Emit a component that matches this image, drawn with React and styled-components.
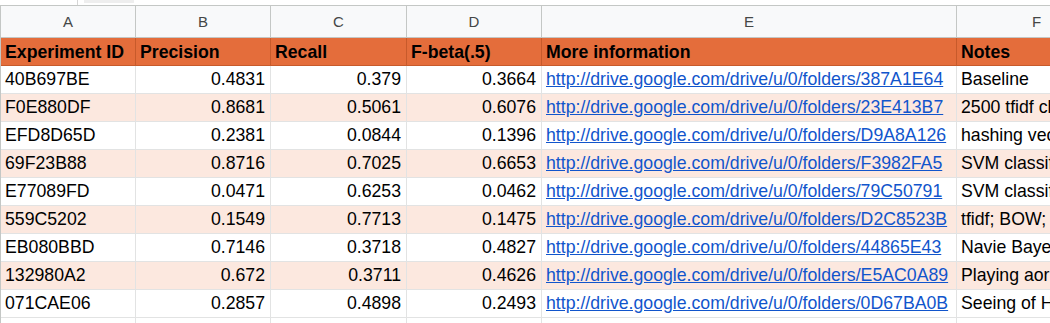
import React from "react";
import styled, { createGlobalStyle } from "styled-components";

const Global = createGlobalStyle`
  html, body { margin: 0; padding: 0; background: #fff; overflow: hidden; }
  body { font-family: "Liberation Sans", Arial, sans-serif; }
`;

const Page = styled.div`
  width: 1050px;
  height: 323px;
  overflow: hidden;
  background: #fff;
`;

const TopStrip = styled.div`
  height: 5px;
  display: flex;
  align-items: flex-start;
`;

const StripDivider = styled.div`
  width: 77px;
  height: 5px;
  border-right: 1px solid #d6d6d6;
`;

const StripGhost = styled.div`
  margin-left: 6px;
  width: 50px;
  height: 3px;
  background: #eeeeee;
`;

const Grid = styled.div`
  display: grid;
  grid-template-columns: 135px 135px 136px 135px 415px 160px;
  width: 1116px;
  border-left: 1px solid #c4c7c5;
  border-top: 1px solid #c4c7c5;
`;

const Cell = styled.div`
  box-sizing: border-box;
  height: 28px;
  border-right: 1px solid #e2e3e3;
  border-bottom: 1px solid #e2e3e3;
  display: flex;
  align-items: center;
  justify-content: ${(p) => (p.$num ? "flex-end" : "flex-start")};
  padding: 0 5px 0 4px;
  font-size: 17.7px;
  color: #000;
  white-space: nowrap;
  overflow: hidden;
  background: ${(p) => (p.$shade ? "#fce8df" : "#fff")};
`;

const ColLetter = styled.div`
  box-sizing: border-box;
  height: 32px;
  border-right: 1px solid #c4c7c5;
  border-bottom: 1px solid #c4c7c5;
  background: #f8f9fa;
  display: flex;
  align-items: center;
  justify-content: center;
  font-size: 15px;
  color: #444746;
`;

const HeadCell = styled.div`
  box-sizing: border-box;
  height: 28px;
  border-right: 1px solid #c75a2b;
  border-bottom: 1px solid #c75a2b;
  background: #e46d3b;
  display: flex;
  align-items: center;
  padding: 1px 4px 0;
  font-size: 17.7px;
  font-weight: bold;
  color: #000;
  white-space: nowrap;
  overflow: hidden;
`;

const Link = styled.a`
  color: #1155cc;
  text-decoration: underline;
`;

const letters = ["A", "B", "C", "D", "E", "F"];
const heads = ["Experiment ID", "Precision", "Recall", "F-beta(.5)", "More information", "Notes"];

const rows = [
  ["40B697BE", "0.4831", "0.379", "0.3664", "387A1E64", "Baseline"],
  ["F0E880DF", "0.8681", "0.5061", "0.6076", "23E413B7", "2500 tfidf char"],
  ["EFD8D65D", "0.2381", "0.0844", "0.1396", "D9A8A126", "hashing vector"],
  ["69F23B88", "0.8716", "0.7025", "0.6653", "F3982FA5", "SVM classifier"],
  ["E77089FD", "0.0471", "0.6253", "0.0462", "79C50791", "SVM classifier"],
  ["559C5202", "0.1549", "0.7713", "0.1475", "D2C8523B", "tfidf; BOW; n"],
  ["EB080BBD", "0.7146", "0.3718", "0.4827", "44865E43", "Navie Bayes"],
  ["132980A2", "0.672", "0.3711", "0.4626", "E5AC0A89", "Playing aorund"],
  ["071CAE06", "0.2857", "0.4898", "0.2493", "0D67BA0B", "Seeing of How"],
];

export default function App() {
  return (
    <Page>
      <Global />
      <TopStrip>
        <StripDivider />
        <StripGhost />
      </TopStrip>
      <Grid>
        {letters.map((l) => (
          <ColLetter key={l}>{l}</ColLetter>
        ))}
        {heads.map((h) => (
          <HeadCell key={h}>{h}</HeadCell>
        ))}
        {rows.map((r, i) => {
          const shade = i % 2 === 1;
          return (
            <React.Fragment key={r[0]}>
              <Cell $shade={shade}>{r[0]}</Cell>
              <Cell $shade={shade} $num>{r[1]}</Cell>
              <Cell $shade={shade} $num>{r[2]}</Cell>
              <Cell $shade={shade} $num>{r[3]}</Cell>
              <Cell $shade={shade}>
                <Link href="#">{`http://drive.google.com/drive/u/0/folders/${r[4]}`}</Link>
              </Cell>
              <Cell $shade={shade}>{r[5]}</Cell>
            </React.Fragment>
          );
        })}
        {letters.map((l) => (
          <Cell key={"e" + l} />
        ))}
      </Grid>
    </Page>
  );
}
